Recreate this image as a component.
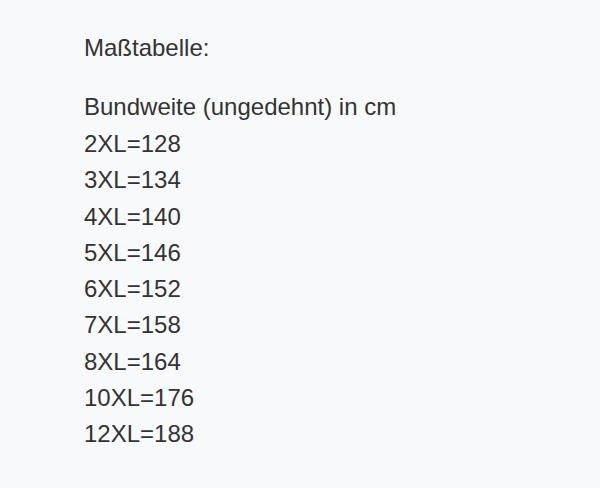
export default function App() {
  const sizes = [
    '2XL=128',
    '3XL=134',
    '4XL=140',
    '5XL=146',
    '6XL=152',
    '7XL=158',
    '8XL=164',
    '10XL=176',
    '12XL=188',
  ];

  return (
    <div className="w-[600px] h-[488px] bg-[#f8f9fa] pl-[84px] pt-[30px] text-[24px] leading-[36px] text-[#333333] font-['Liberation_Sans',Arial,sans-serif]">
      <p>Maßtabelle:</p>
      <p className="mt-[23px]">Bundweite (ungedehnt) in cm</p>
      <div className="mt-[1px] leading-[36.25px]">
        {sizes.map((s) => (
          <p key={s}>{s}</p>
        ))}
      </div>
    </div>
  );
}
